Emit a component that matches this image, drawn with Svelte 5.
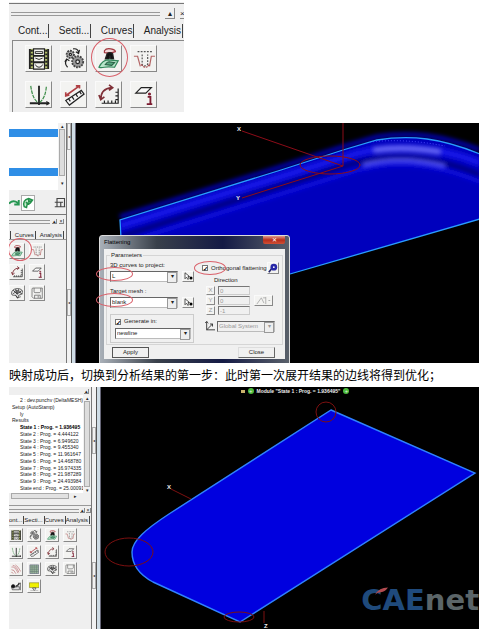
<script>
	const states = [
		'2 : 4.444122',
		'3 : 6.949620',
		'4 : 9.455340',
		'5 : 11.961647',
		'6 : 14.468780',
		'7 : 16.974335',
		'8 : 21.987289',
		'9 : 24.493984'
	].map((s) => s.split(' : '));

	const mainTools = ['film', 'gears', 'flatten', 'trim', 'graph', 'ruler', 'arc', 'info'];
	const sideTools = ['flatten', 'trim', 'arc', 'info', 'fan', 'save'];
	const allTools = [...mainTools, 'waves', 'grid', 'fan', 'save', 'cam', 'screen'];

	let curves = $state('L');
	let mesh = $state('blank');
	let target = $state('newline');
	let generate = $state(true);
	let orthogonal = $state(true);
	let direction = $state([
		{ axis: 'X', value: '0' },
		{ axis: 'Y', value: '0' },
		{ axis: 'Z', value: '-1' }
	]);
</script>

{#snippet icon(name)}
	<svg class="icon" viewBox="0 0 24 24" fill="none" stroke="#222" stroke-width="1.3" aria-hidden="true">
		{#if name === 'film'}
			<path d="M2 1h20v22H2z" fill="#b5c26a" stroke="none" />
			<path d="M6 1h12v22H6z" fill="#f4f4f0" />
			<path d="M2 1v22M22 1v22M6 8.5h12M6 15.5h12" stroke-width="2" />
			<path d="M4 2v21M20 2v21" stroke-width="2.4" stroke-dasharray="2 2" />
			<path d="M8 4h8v2H8zM8 11q4 3 8 0M8 18q1 3 4 3t4-3" stroke-width="1" />
		{:else if name === 'gears'}
			<circle cx="8" cy="7" r="4" fill="#aaa" stroke="#444" stroke-width="2" stroke-dasharray="2 1" />
			<circle cx="8" cy="7" r="1.2" fill="#fff" />
			<circle cx="16" cy="15" r="6" fill="#999" stroke="#444" stroke-width="2" stroke-dasharray="2 1" />
			<circle cx="16" cy="15" r="2" fill="#eee" />
			<path d="M11 1q5-1 6 4M18 2l-1 4-3-2M4 13q-3 4 1 8M2 15l2-3 3 2" />
		{:else if name === 'flatten'}
			<path d="M7 3q2-3 7-2t5 3q-5 2-12 1z" stroke="#a33840" fill="#efd8d8" />
			<path d="M10 6q3-2 6 0l1 6h-3l-1-3-1 3H8z" fill="#111" />
			<path d="M1 21Q5 13 11 13l11 1-4 7q-7-1-11 0-4 1-6 0z" fill="#b8e5ca" stroke="#32875b" />
			<path d="M8 18q2-3 4-3l6 1-3 3z" fill="#58a880" stroke="#286044" />
		{:else if name === 'trim'}
			<path d="M5 4h17M10 7v11q2 3 6 0V7" stroke="#555" stroke-dasharray="2 1.4" />
			<path d="M1 9h4l3 11M24 9h-4l-2 11" stroke="#b46565" />
			<path d="M9 18q5 6 9 0" stroke="#a34242" stroke-dasharray="2 1" />
		{:else if name === 'graph'}
			<path d="M2 21h21M12 2v21" stroke-width="2" />
			<path d="M3 2q2 15 8 18M20 3q-1 12-7 17" stroke="#398b45" stroke-dasharray="4 1" />
			<path d="M20 19l3 2-3 2" />
		{:else if name === 'ruler'}
			<path d="M3 18L20 7l3 4L7 23z" fill="#f7f7f7" />
			<path d="M8 19l-2-3M12 17l-2-3M16 14l-2-3M20 11l-2-3" />
			<path d="M4 12L18 2M3 9v4l4-1M14 2h4v3" stroke="#b04045" stroke-width="1.8" />
		{:else if name === 'arc'}
			<path d="M4 21h18V5M7 21v-3M11 21v-3M15 21v-3M19 21v-3M22 17h-3M22 13h-3M22 9h-3" />
			<path d="M3 17Q3 5 15 4M1 12l2 5 4-3M12 1l4 3-4 3" stroke="#803138" stroke-width="1.8" />
		{:else if name === 'info'}
			<path d="M3 10l6-6h11l-6 6z" fill="#fafafa" />
			<path d="M16 14h3v8M15 22h6" stroke="#7c1b30" stroke-width="2" />
			<circle cx="18" cy="11" r="1" fill="#7c1b30" stroke="#7c1b30" />
		{:else if name === 'fan'}
			<path d="M1 13Q1 4 12 3q11 0 11 8-1 4-8 5l-2 6-4-6q-8 1-8-3z" fill="#e9e9e9" />
			<path d="M12 14L4 6M12 14L9 4M12 14l3-10M12 14l9-7M3 14q9-9 19 0M6 9q7-5 14 2M9 16l3 5 7-2" />
		{:else if name === 'save'}
			<path d="M2 4q0-2 2-2h18v20H5l-3-3zM6 2v7q0 2 2 2h9l2-2V2M7 22v-6h11v6M14 17v4" stroke="#555" />
		{:else if name === 'waves'}
			<path d="M1 7q8-3 15 14M4 3q8 1 14 16M10 2q6 3 12 15M1 13q6-1 10 9M1 19q2-1 4 3" stroke="#b3575b" />
		{:else if name === 'grid'}
			<path d="M2 2h20v20H2z" fill="#9bb69b" stroke="#557" />
			<path d="M2 7h20M2 12h20M2 17h20M7 2v20M12 2v20M17 2v20" stroke="#677c77" />
		{:else if name === 'cam'}
			<path d="M1 13h18v7H3zM11 15L22 4v17" fill="#ddd" />
			<circle cx="5" cy="12" r="4" fill="#111" />
			<path d="M11 12q6-2 8-8" stroke-width="2.5" />
		{:else if name === 'screen'}
			<path d="M1 4h22v11H1z" fill="#f0f000" stroke="#777428" />
			<path d="M8 16h8l-4 6z" fill="#fff" />
			<path d="M3 22h18" stroke="#999" />
		{/if}
	</svg>
{/snippet}

{#snippet toolbox(tabs, tools, kind)}
	<section class="toolbox {kind}" aria-label="Tools">
		<div class="grip">
			<i></i>
			<button aria-label="Collapse">▴</button>
			<button aria-label="Close panel">×</button>
		</div>
		<nav class="tabs">
			{#each tabs as tab}
				<button class:active={tab === 'Analysis'}>{tab}</button>
			{/each}
		</nav>
		<div class="tools">
			{#each tools as tool}
				<button class="tool" aria-label={tool}>
					{@render icon(tool)}
					{#if tool === 'flatten' && kind !== 'small'}<span class="ring"></span>{/if}
				</button>
			{/each}
		</div>
	</section>
{/snippet}

{#snippet splitter()}
	<div class="splitter"><span>◂</span><span>◂</span></div>
{/snippet}

<main>
	<div class="top">
		{@render toolbox(['Cont...', 'Secti...', 'Curves', 'Analysis'], mainTools, 'large')}
	</div>

	<div class="shot project">
		<aside>
			<div class="browser">
				<div class="list">
					<div class="rows"><b></b><b></b></div>
					<div class="scroll"><span>▴</span><i></i><span>▾</span></div>
				</div>
				<div class="actions">
					<button aria-label="Undo curve"><svg viewBox="0 0 16 16" fill="none" stroke="#269652" stroke-width="2.5"><path d="M0 9q5-6 12-1M13 4v6H7" /></svg></button>
					<button class="raised" aria-label="Surface"><svg viewBox="0 0 16 16" fill="#c8eed0" stroke="#24914a" stroke-width="2"><path d="M3 13Q0 4 9 2l5 2-3 4-4 1-1 5zM9 2v4l4-1M5 7l5 3" /></svg></button>
					<button class="window" aria-label="Restore window"><svg viewBox="0 0 16 16" fill="none" stroke="#444" stroke-width="1.5"><path d="M4 2h10v11H4zM1 13h14M1 7h8v6M9 7h3" /></svg></button>
				</div>
			</div>
			{@render toolbox(['', 'Curves', 'Analysis'], sideTools, 'medium')}
		</aside>
		{@render splitter()}
		<div class="canvas">
			<svg class="scene" viewBox="76 123 403 240" preserveAspectRatio="xMinYMin slice" role="img" aria-label="Formed part">
				<defs>
					<clipPath id="part"><path d="M120 220L281 170 343 150 377 140Q402 136 427 139 450 142 480 154V219L290 274 121 330z" /></clipPath>
					<filter id="soft" x="-20%" y="-50%" width="140%" height="200%"><feGaussianBlur stdDeviation="2" /></filter>
				</defs>
				<path d="M120 217L281 167 343 147 377 137Q402 133 427 136 450 139 480 150" fill="none" stroke="#0000a8" stroke-width="5" filter="url(#soft)" />
				<g clip-path="url(#part)" fill="none">
					<path d="M76 123h404v240H76z" fill="#0000bd" />
					<g filter="url(#soft)">
						<path d="M120 226L345 157Q410 136 480 163" stroke="#1717e8" stroke-width="7" />
						<path d="M120 237L345 166Q410 146 480 175" stroke="#000083" stroke-width="5" />
						<path d="M130 241L345 174Q410 152 480 182" stroke="#1010df" stroke-width="4" />
						<path d="M374 150Q405 146 440 152" stroke="#6262f4" stroke-width="6" />
						<path d="M363 165Q400 155 445 166" stroke="#5757ff" stroke-width="3" />
					</g>
					<path d="M370 142Q405 138 445 146" stroke="#4a4aff" stroke-dasharray="1 2" />
				</g>
				<path d="M121 238L120 220 281 170 343 150 377 140Q402 136 427 139 450 142 480 154M480 219L290 274" fill="none" stroke="#299dff" stroke-width="1.3" />
				<g fill="none" stroke="#8c0c18" stroke-width="1">
					<path d="M242 131L343 166V123M242 198L343 166" />
					<ellipse cx="330" cy="165" rx="30" ry="9" />
				</g>
				<g class="axis"><text x="237" y="131">X</text><text x="236" y="200">Y</text></g>
			</svg>

			<form class="dialog" onsubmit={(e) => e.preventDefault()}>
				<header><h2>Flattening</h2><button type="button" class="exit" aria-label="Close dialog">✕</button></header>
				<div class="body">
					<fieldset class="params">
						<legend>Parameters</legend>
						<div class="left">
							<label for="curves">3D curves to project:</label>
							<div class="pick">
								<span class="combo"><select id="curves" bind:value={curves}><option>L</option></select></span>
								<button type="button" class="tool" aria-label="Pick curves"><svg viewBox="0 0 12 12"><path d="M2 1v8l2-2 2 3 1-1-1-3h2z" fill="#fff" stroke="#222" /><circle cx="10" cy="8" r="2" /></svg></button>
								<span class="ring"></span>
							</div>
							<label for="mesh">Target mesh :</label>
							<div class="pick">
								<span class="combo"><select id="mesh" bind:value={mesh}><option>blank</option></select></span>
								<button type="button" class="tool" aria-label="Pick mesh"><svg viewBox="0 0 12 12"><path d="M2 1v8l2-2 2 3 1-1-1-3h2z" fill="#fff" stroke="#222" /><circle cx="10" cy="8" r="2" /></svg></button>
								<span class="ring"></span>
							</div>
							<div class="group">
								<label class="check"><input type="checkbox" bind:checked={generate} />Generate in:</label>
								<span class="combo"><select aria-label="Generate in" bind:value={target}><option>newline</option></select></span>
							</div>
						</div>
						<div class="right">
							<div class="ortho">
								<label class="check"><input type="checkbox" bind:checked={orthogonal} />Orthogonal flattening</label>
								<button type="button" class="tool" aria-label="Preview"><svg viewBox="0 0 12 12"><path d="M1 11l4-5" stroke="#226" stroke-width="2" /><circle cx="7" cy="5" r="4" fill="#2929a8" /><circle cx="7" cy="5" r="1" fill="#fff" /></svg></button>
								<span class="ring"></span>
							</div>
							<p>Direction</p>
							<div class="vector">
								<div class="axes">
									{#each direction as d}
										<label><span class="tool">{d.axis}</span><input type="text" bind:value={d.value} disabled /></label>
									{/each}
								</div>
								<button type="button" class="tool wide" aria-label="Pick direction" disabled><svg viewBox="0 0 18 10" fill="none" stroke="#aaa"><path d="M1 9l5-7 3 6M8 2h3M11 1v8M14 5h2" /></svg></button>
							</div>
							<div class="system">
								<svg viewBox="0 0 12 12" fill="none" stroke="#222"><path d="M2 0v10h10M2 10l7-7M6 3h3v3M0 2l2-2 2 2" /></svg>
								<span class="combo off"><select aria-label="System" disabled><option>Global System</option></select></span>
							</div>
						</div>
					</fieldset>
					<footer><button type="submit">Apply</button><button type="button">Close</button></footer>
				</div>
			</form>
		</div>
	</div>

	<p class="caption">映射成功后，切换到分析结果的第一步：此时第一次展开结果的边线将得到优化；</p>

	<div class="shot result">
		<aside>
			<div class="treebox">
				<div class="grip"><button aria-label="Collapse">▴</button></div>
				<div class="list">
					<ul>
						<li class="leaf">2 : dev.punchv (DeltaMESH)</li>
						<li>Setup (AutoStamp)</li>
						<li class="leaf">ly</li>
						<li>Results</li>
						<li class="leaf current">State 1 : Prog. = 1.936495</li>
						{#each states as [n, value]}
							<li class="leaf">State {n} : Prog. = {value}</li>
						{/each}
						<li class="leaf">State end : Prog. = 25.00091</li>
					</ul>
					<div class="scroll"><span>▴</span><i></i><span>▾</span></div>
				</div>
				<div class="hscroll"><i></i><span>▸</span></div>
			</div>
			{@render toolbox(['ont...', 'Secti...', 'Curves', 'Analysis'], allTools, 'small')}
		</aside>
		{@render splitter()}
		<div class="canvas">
			<svg class="scene" viewBox="101 387 378 242" preserveAspectRatio="xMinYMin slice" role="img" aria-label="Flattened blank">
				<path d="M331 410L475 473 240 622 153 582C138 574 132 564 132 552 132 541 146 529 169 514z" fill="#0000df" stroke="#2f82ff" stroke-width="1.4" />
				<g fill="none" stroke="#7c1010" stroke-width="1">
					<circle cx="326" cy="412" r="10" />
					<ellipse cx="129" cy="552" rx="24" ry="14" />
					<ellipse cx="239" cy="617" rx="15" ry="5" />
					<path d="M171 489L191 499M264 611v12" />
				</g>
				<g class="axis"><text x="167" y="489">X</text><text x="264" y="628">Z</text></g>
			</svg>
			<div class="module"><i></i><em>+</em><strong>Module "State 1 : Prog. = 1.936495"</strong><em>+</em></div>
			<div class="logo"><b>CAE</b>net
				<svg viewBox="0 0 16 10" aria-hidden="true"><path d="M0 9Q5 0 16 0q-3 5-9 6-4 0-7 3z" fill="#b34b50" /></svg>
			</div>
		</div>
	</div>
</main>

<style>
	:global(body) {
		margin: 0;
		background: #fff;
	}

	main {
		padding: 2px 8px 6px 9px;
		font-family: "Liberation Sans", Arial, sans-serif;
		color: #222;
	}

	main :global(*) {
		box-sizing: border-box;
	}

	button,
	select,
	input {
		font: inherit;
		color: inherit;
		margin: 0;
		padding: 0;
		border: 0;
		background: none;
	}

	i {
		display: block;
	}

	svg {
		display: block;
	}

	h2,
	p,
	ul {
		margin: 0;
		padding: 0;
	}

	.top {
		display: flex;
		margin-bottom: 11px;
	}

	/* toolbox */
	.toolbox {
		background: #efefef;
		overflow: hidden;
	}

	.grip {
		display: flex;
		align-items: center;
		justify-content: flex-end;
		overflow: hidden;
	}

	.grip i {
		flex: 1;
		height: 4px;
		border: solid #999;
		border-width: 1px 0;
	}

	.grip button {
		display: grid;
		place-items: center;
		flex: none;
		width: 5px;
		height: 5px;
		font-size: 5px;
		line-height: 5px;
		border: solid #888;
		border-width: 0 1px 1px 0;
	}

	.tabs {
		display: flex;
		justify-content: space-between;
		white-space: nowrap;
	}

	.tabs button {
		border-right: 1px solid #444;
		padding-right: 1px;
	}

	.tool {
		position: relative;
		display: grid;
		place-items: center;
		background: #f3f3f1;
		border: 1px solid #fafafa;
		border-right-color: #888;
		border-bottom-color: #888;
	}

	.tools {
		display: flex;
		flex-wrap: wrap;
	}

	.icon {
		width: 88%;
		height: 88%;
	}

	.ring {
		position: absolute;
		border: 1px solid #d9606a;
		border-radius: 50%;
		pointer-events: none;
		z-index: 2;
	}

	.large {
		width: 175px;
		padding-top: 1px;
		font-size: 10px;
	}

	.large .grip {
		border-top: 1px solid #777;
		padding: 4px 0 3px 2px;
		gap: 5px;
	}

	.large .grip button {
		width: 10px;
		height: 11px;
		font-size: 8px;
	}

	.large .grip button:last-child {
		width: 4px;
		border-right: 0;
	}

	.large .tabs {
		padding: 2px 1px 0 9px;
	}

	.large .tabs button {
		height: 14px;
		line-height: 14px;
	}

	.large .tools {
		gap: 9px 8px;
		margin: 2px 0 0 3px;
		padding: 4px 16px 4px 12px;
		border: solid #888;
		border-width: 1px 0 0 1px;
	}

	.large .tool {
		width: 27px;
		height: 27px;
	}

	.large .ring {
		width: 37px;
		height: 39px;
		left: -5px;
		top: -8px;
	}

	.large .tool:has(.ring),
	.medium .tool:has(.ring) {
		z-index: 2;
	}

	.large,
	.medium {
		overflow: visible;
	}

	.medium,
	.small {
		font-size: 6px;
		line-height: 8px;
	}

	.medium {
		flex: 1;
		padding-top: 4px;
	}

	.medium .grip {
		gap: 2px;
		padding-right: 2px;
	}

	.medium .tabs {
		padding: 7px 2px 0 0;
	}

	.medium .tools {
		gap: 5px 4px;
		padding: 3px 18px 0 0;
		border-top: 1px solid #999;
	}

	.medium .tool {
		width: 16px;
		height: 16px;
	}

	.medium .ring {
		width: 24px;
		height: 23px;
		left: -2px;
		top: -6px;
	}

	.small {
		flex: 1;
		padding-top: 2px;
	}

	.small .grip {
		gap: 1px;
	}

	.small .tabs {
		padding: 3px 2px 1px 0;
	}

	.small .tools {
		gap: 3px 4px;
		padding: 2px 10px 0 0;
		border-top: 1px solid #aaa;
	}

	.small .tool {
		width: 14px;
		height: 14px;
	}

	/* window captures */
	.shot {
		display: flex;
		background: #efefef;
	}

	aside {
		display: flex;
		flex-direction: column;
		flex: none;
		overflow: hidden;
	}

	.splitter {
		display: flex;
		flex-direction: column;
		justify-content: space-between;
		flex: none;
		width: 10px;
		border-left: 1px solid #777;
		background: linear-gradient(90deg, #f2f2f2 4px, #555 4px, #555 5px, #cfdde6 5px, #cfdde6 8px, #667 8px);
		font-size: 4px;
	}

	.splitter span {
		display: grid;
		place-items: center;
		width: 4px;
		height: 27px;
		border: 1px solid #aaa;
	}

	.canvas {
		position: relative;
		flex: 1;
		min-width: 0;
		background: #000;
		overflow: hidden;
	}

	.scene {
		width: 100%;
		height: 100%;
	}

	.axis {
		fill: #eee;
		font-size: 6px;
		font-weight: bold;
	}

	.project {
		height: 240px;
	}

	.project aside {
		width: 57px;
	}

	.project .splitter {
		padding-bottom: 47px;
	}

	.browser {
		height: 92px;
		border-bottom: 1px solid #777;
	}

	.list {
		display: flex;
		background: #fff;
	}

	.browser .list {
		height: 67px;
	}

	.rows {
		flex: 1;
		padding-top: 6px;
	}

	.rows b {
		display: block;
		height: 8px;
		margin-bottom: 31px;
		background: #2f8ee6;
	}

	.scroll {
		display: flex;
		flex-direction: column;
		align-items: center;
		flex: none;
		width: 8px;
		background: #f2f2f2;
		font-size: 5px;
		line-height: 6px;
	}

	.scroll i {
		flex: 1;
		width: 6px;
		background: #ddd;
		border: 1px solid #aaa;
	}

	.browser .scroll span:last-child {
		padding: 4px 0;
	}

	.actions {
		display: flex;
		align-items: center;
		padding-top: 5px;
	}

	.actions svg {
		width: 12px;
		height: 14px;
	}

	.actions .raised {
		border: 1px solid #aaa;
		background: #fff;
	}

	.actions .window {
		margin-left: auto;
	}

	.actions .window svg {
		width: 12px;
	}

	/* flattening dialog */
	.dialog {
		position: absolute;
		left: 23px;
		top: 112px;
		width: 191px;
		padding: 0 4px 4px;
		border: 1px solid #ddd;
		border-radius: 3px 3px 0 0;
		background: linear-gradient(90deg, #a9b0b8, #39404a 30%, #141a45 65%, #59606a);
		font-size: 6px;
		line-height: 7px;
	}

	.dialog header {
		display: flex;
		align-items: center;
		justify-content: space-between;
		height: 13px;
	}

	h2 {
		font-size: 6px;
		font-weight: normal;
		color: #000;
	}

	.exit {
		width: 22px;
		height: 8px;
		align-self: flex-start;
		border-radius: 0 0 2px 2px;
		background: linear-gradient(#dd998c, #b72d1c 50%, #d05035);
		color: #fff;
	}

	.body {
		padding: 3px 2px 0;
		background: #f0f0f0;
	}

	fieldset {
		display: flex;
		gap: 8px;
		min-width: 0;
		margin: 0;
		padding: 3px 3px 1px;
		border: 1px solid #d5d5d5;
	}

	legend {
		padding: 0 1px;
	}

	.left {
		flex: 1;
		display: flex;
		flex-direction: column;
	}

	.left > label {
		height: 8px;
	}

	.pick {
		position: relative;
		display: flex;
		gap: 4px;
		margin: 1px 0 6px;
	}

	.combo {
		position: relative;
		display: block;
		flex: 1;
		height: 11px;
		background: #fff;
		border: 1px solid #bbb;
		border-top-color: #666;
		border-left-color: #666;
	}

	.combo::after {
		content: "▾";
		position: absolute;
		right: 0;
		top: 0;
		width: 8px;
		height: 9px;
		background: #eee;
		border: 1px solid #999;
		text-align: center;
		pointer-events: none;
	}

	select {
		display: block;
		appearance: none;
		width: 100%;
		height: 9px;
		padding-left: 1px;
		line-height: 9px;
	}

	.off,
	.off select {
		background: #f0f0f0;
		color: #999;
		opacity: 1;
	}

	.pick .tool {
		width: 12px;
		height: 11px;
	}

	.pick svg {
		width: 10px;
		height: 9px;
	}

	.pick .ring {
		left: -14px;
		top: -4px;
		width: 37px;
		height: 14px;
	}

	.group {
		padding: 2px 2px 3px 4px;
		border: 1px solid #ccc;
	}

	.check {
		display: flex;
		align-items: center;
		gap: 3px;
		height: 9px;
		white-space: nowrap;
	}

	.group .check {
		margin-bottom: 2px;
	}

	.check input {
		appearance: none;
		display: grid;
		place-items: center;
		width: 6px;
		height: 6px;
		border: 1px solid #777;
		background: #fff;
	}

	.check input:checked::after {
		content: "✓";
		font-size: 6px;
		font-weight: bold;
		line-height: 6px;
		color: #000;
	}

	.right {
		width: 77px;
	}

	.ortho {
		position: relative;
		display: flex;
		align-items: center;
		justify-content: space-between;
	}

	.ortho .tool {
		width: 12px;
		height: 12px;
	}

	.ortho .tool svg {
		width: 10px;
		height: 10px;
	}

	.ortho .ring {
		left: -8px;
		top: -1px;
		width: 32px;
		height: 14px;
	}

	.right p {
		padding: 3px 0 2px 12px;
	}

	.vector {
		display: flex;
		align-items: center;
		gap: 4px;
		padding-left: 4px;
	}

	.axes {
		display: grid;
		gap: 1px;
		color: #999;
	}

	.axes label {
		display: flex;
		gap: 3px;
	}

	.axes .tool {
		width: 9px;
		height: 9px;
	}

	.axes input {
		width: 32px;
		height: 9px;
		padding-left: 1px;
		border: 1px solid #ccc;
		border-top-color: #777;
		border-left-color: #777;
	}

	.wide {
		width: 19px;
		height: 11px;
	}

	.wide svg {
		width: 16px;
		height: 9px;
	}

	.system {
		display: flex;
		align-items: center;
		gap: 2px;
		padding: 6px 4px 0 3px;
	}

	.system svg {
		width: 10px;
		height: 11px;
	}

	.dialog footer {
		display: flex;
		justify-content: space-between;
		padding: 2px 8px 1px 6px;
	}

	footer button {
		width: 37px;
		height: 11px;
		border: 1px solid #ddd;
		border-right-color: #666;
		border-bottom-color: #666;
	}

	footer button:first-child {
		border-color: #555;
	}

	.caption {
		padding: 6px 0 3px;
		font-family: "Liberation Sans", "Noto Sans CJK SC", sans-serif;
		font-size: 12px;
		line-height: 15px;
		color: #000;
	}

	/* result view */
	.result {
		height: 242px;
	}

	.result aside {
		width: 82px;
	}

	.result .splitter {
		padding: 40px 0;
	}

	.treebox {
		height: 119px;
		border-bottom: 1px solid #999;
	}

	.treebox .grip {
		height: 8px;
		padding-right: 2px;
	}

	.treebox .list {
		height: 98px;
	}

	ul {
		display: flex;
		flex-direction: column;
		justify-content: space-between;
		flex: 1;
		min-width: 0;
		padding: 2px 0 2px 3px;
		overflow: hidden;
		list-style: none;
		font-size: 5px;
		line-height: 6px;
		white-space: nowrap;
	}

	.leaf {
		padding-left: 8px;
	}

	.current {
		font-weight: bold;
		color: #000;
	}

	.hscroll {
		display: flex;
		gap: 5px;
		padding: 0 6px 0 2px;
		font-size: 5px;
		line-height: 6px;
	}

	.hscroll i {
		width: 58px;
		height: 6px;
		background: #e2e2e2;
		border: 1px solid #aaa;
	}

	.module {
		position: absolute;
		top: 1px;
		left: 0;
		right: 0;
		display: flex;
		align-items: center;
		justify-content: center;
		gap: 3px;
		padding-left: 10px;
		font-size: 5px;
		line-height: 6px;
		color: #eee;
	}

	.module i {
		width: 4px;
		height: 3px;
		background: #c9b26a;
	}

	.module em {
		width: 6px;
		height: 6px;
		border-radius: 50%;
		background: #4cbb3c;
		font-style: normal;
		text-align: center;
	}

	.logo {
		position: absolute;
		right: 0;
		bottom: 12px;
		font-family: "DejaVu Sans", sans-serif;
		font-size: 29px;
		font-weight: bold;
		line-height: 34px;
		color: #5b6568;
	}

	.logo b {
		color: #1f4a7c;
	}

	.logo svg {
		position: absolute;
		left: 14px;
		top: 4px;
		width: 13px;
		height: 9px;
	}
</style>
